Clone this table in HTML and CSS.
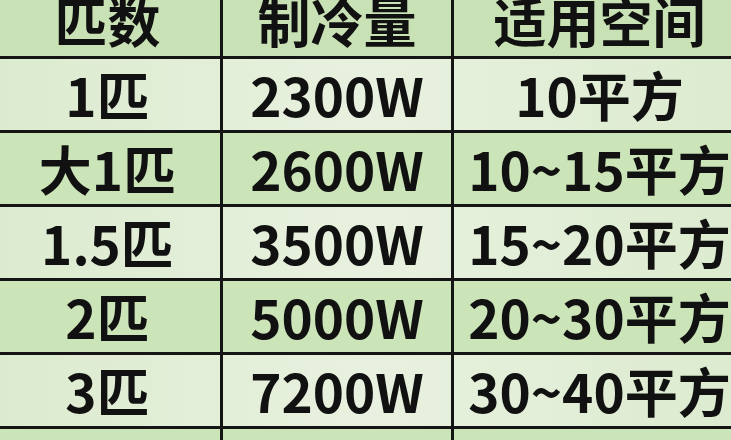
FILE: index.html
```html
<!DOCTYPE html>
<html lang="zh-CN">
<head>
<meta charset="utf-8">
<title>空调匹数对照表</title>
<link rel="stylesheet" href="styles.css">
</head>
<body>
<div class="frame">
<table class="spec">
  <thead>
    <tr class="row-head"><th>匹数</th><th>制冷量</th><th>适用空间</th></tr>
  </thead>
  <tbody>
    <tr class="row-light"><td>1匹</td><td>2300W</td><td>10平方</td></tr>
    <tr class="row-green"><td>大1匹</td><td>2600W</td><td>10~15平方</td></tr>
    <tr class="row-light"><td>1.5匹</td><td>3500W</td><td>15~20平方</td></tr>
    <tr class="row-green"><td>2匹</td><td>5000W</td><td>20~30平方</td></tr>
    <tr class="row-light"><td>3匹</td><td>7200W</td><td>30~40平方</td></tr>
    <tr class="row-green"><td>5匹</td><td>12000W</td><td>50~70平方</td></tr>
  </tbody>
</table>
</div>
</body>
</html>
```

FILE: styles.css
```css
html, body {
  margin: 0;
  padding: 0;
  width: 731px;
  height: 440px;
  overflow: hidden;
  background: #dbeacd;
}

.frame {
  margin-top: -18px;
  margin-left: -8px;
}

.spec {
  border-collapse: collapse;
  table-layout: fixed;
  width: 750px;
  font-family: "Noto Sans CJK SC", "Noto Sans", sans-serif;
  font-weight: 700;
  font-size: 53px;
  color: #111;
}

.spec th, .spec td {
  border: 3px solid #151515;
  height: 71px;
  padding: 0;
  text-align: center;
  vertical-align: middle;
  line-height: 1;
  white-space: nowrap;
  overflow: hidden;
}

.spec th:nth-child(1), .spec td:nth-child(1) { width: 225px; }
.spec th:nth-child(2), .spec td:nth-child(2) { width: 228px; }
.spec th:nth-child(3), .spec td:nth-child(3) { width: 291px; }

.row-head { background: #c9e2b5; }
.row-light { background: linear-gradient(90deg, #dcebcf 0%, #e8f1df 50%, #dcebcf 100%); }
.row-green { background: #cbe4b8; }
```
